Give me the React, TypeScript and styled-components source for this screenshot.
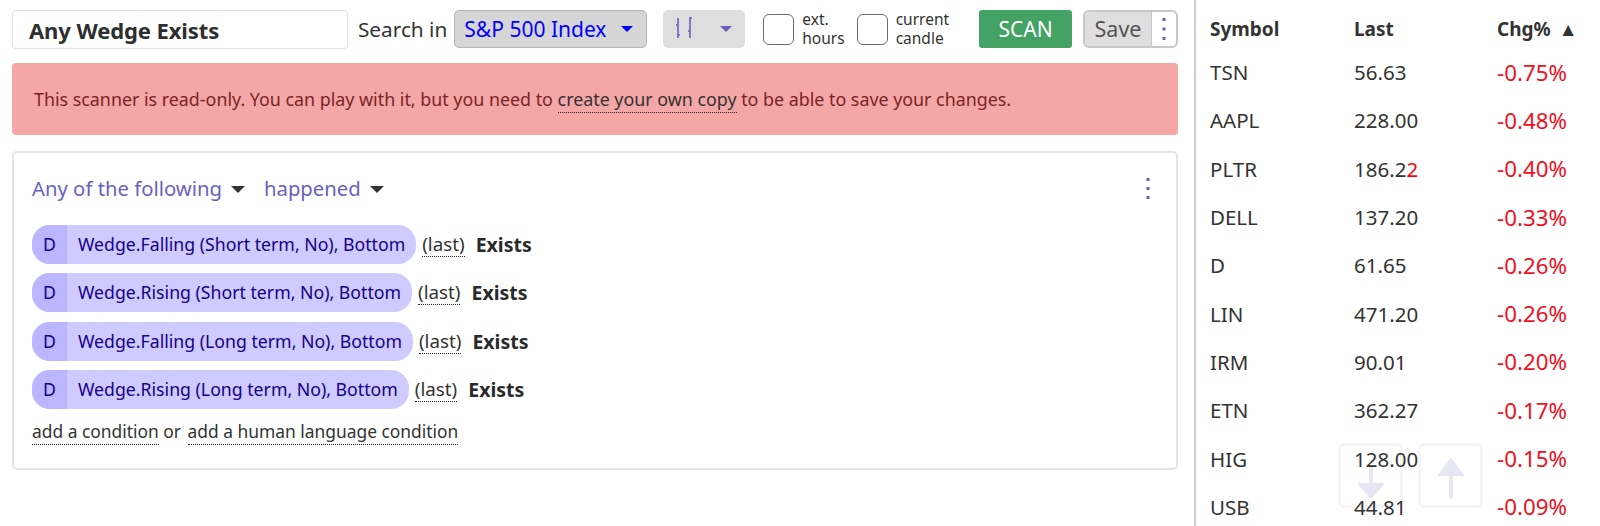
import styled, { createGlobalStyle } from "styled-components"

const GlobalStyles = createGlobalStyle`
  *,
  *::before,
  *::after {
    box-sizing: border-box;
    margin: 0;
    padding: 0;
  }

  html,
  body {
    height: 526px;
    overflow: hidden;
    background: #fff;
    font-family: "Noto Sans", "Open Sans", sans-serif;
    color: #333;
  }
`

const Page = styled.div`
  position: relative;
  display: flex;
  width: 1600px;
  height: 526px;
  overflow: hidden;
`

const Main = styled.main`
  width: 1194px;
  flex: none;
  padding: 9px 16px 0 12px;
  display: flex;
  flex-direction: column;
`

const Toolbar = styled.div`
  display: flex;
  align-items: flex-start;
  height: 40px;
`

const NameInput = styled.div`
  width: 336px;
  height: 39px;
  margin-top: 1px;
  border: 1px solid #e2e2e2;
  border-radius: 4px;
  padding-left: 16px;
  font-size: 22px;
  line-height: 39px;
  font-weight: 700;
  letter-spacing: -0.1px;
  color: #2e2e2e;
  white-space: nowrap;
`

const SearchLabel = styled.span`
  margin-left: 10px;
  font-size: 20.8px;
  line-height: 40px;
  color: #333;
  white-space: nowrap;
`

const MarketSelect = styled.div`
  width: 193px;
  height: 38px;
  margin: 1px 0 0 7px;
  padding: 0 13px 0 9px;
  display: flex;
  align-items: center;
  justify-content: space-between;
  background: #d6d6d6;
  border: 1px solid #b5b5b5;
  border-radius: 5px;
  color: #0000ff;
  font-size: 21px;
  white-space: nowrap;
`

const Caret = styled.span<{ $color: string; $size: number }>`
  width: 0;
  height: 0;
  border-left: ${(props) => props.$size}px solid transparent;
  border-right: ${(props) => props.$size}px solid transparent;
  border-top: ${(props) => props.$size}px solid ${(props) => props.$color};
`

const ChartSelect = styled.div`
  width: 82px;
  height: 38px;
  margin: 1px 0 0 16px;
  padding: 0 13px 0 12px;
  display: flex;
  align-items: center;
  justify-content: space-between;
  background: #dedede;
  border-radius: 5px;
`

const CheckGroup = styled.div<{ $gap: number }>`
  display: flex;
  align-items: center;
  height: 40px;
  margin-left: ${(props) => props.$gap}px;
`

const CheckBox = styled.span`
  width: 31px;
  height: 31px;
  flex: none;
  border: 1.5px solid #6b6b6b;
  border-radius: 6px;
  background: #fff;
`

const CheckLabel = styled.span`
  margin-left: 8px;
  font-size: 15.5px;
  line-height: 19px;
  color: #333;
`

const ScanButton = styled.div`
  width: 93px;
  height: 38px;
  margin: 1px 0 0 30px;
  background: #44a265;
  border-radius: 3px;
  color: #fff;
  font-size: 21px;
  line-height: 38px;
  text-align: center;
`

const SaveGroup = styled.div`
  width: 95px;
  height: 38px;
  margin: 1px 0 0 11px;
  display: flex;
  border: 2px solid #c8c8c8;
  border-radius: 6px;
  overflow: hidden;
`

const SaveButton = styled.div`
  flex: 1;
  background: #dedede;
  color: #555;
  font-size: 21.5px;
  line-height: 34px;
  text-align: center;
`

const SaveMenu = styled.div`
  width: 25px;
  display: flex;
  align-items: center;
  justify-content: center;
  border-left: 1px solid #c8c8c8;
`

const Notice = styled.div`
  height: 72px;
  margin-top: 14px;
  padding-left: 22px;
  background: #f5a6a6;
  border-radius: 4px;
  color: #7a2525;
  font-size: 17.85px;
  line-height: 72px;
  white-space: nowrap;
`

const DottedLink = styled.span`
  color: #333;
  border-bottom: 1.5px dotted #222;
  padding-bottom: 1px;
`

const Card = styled.section`
  height: 319px;
  margin-top: 16px;
  padding: 15px 19px 0 18px;
  border: 2px solid #e4e4e4;
  border-radius: 5px;
`

const CardHeader = styled.div`
  display: flex;
  align-items: center;
  height: 40px;
  margin-bottom: 17px;
`

const Selector = styled.span`
  color: #6a5fc1;
  font-size: 20.3px;
`

const HeaderCaret = styled.span<{ $left: number; $right: number }>`
  margin: 2px ${(props) => props.$right}px 0 ${(props) => props.$left}px;
  display: flex;
`

const CardMenu = styled.div`
  margin-left: auto;
  margin-right: 7px;
  display: flex;
`

const ConditionRow = styled.div`
  display: flex;
  align-items: center;
  height: 39px;
  margin-bottom: 9.3px;
`

const Chip = styled.div`
  display: flex;
  height: 39px;
  border-radius: 18px;
  overflow: hidden;
  background: #cfcbff;
  color: #15008c;
  font-size: 17.7px;
  line-height: 39px;
`

const ChipTag = styled.span`
  width: 35px;
  background: #bbb6ff;
  text-align: center;
`

const ChipLabel = styled.span`
  padding: 0 11px;
`

const LastLabel = styled.span`
  margin-left: 6px;
  font-size: 18.8px;
  line-height: 24px;
  color: #333;
  border-bottom: 1.5px dotted #222;
`

const ExistsLabel = styled.span`
  margin-left: 11px;
  font-size: 19.5px;
  font-weight: 700;
  color: #2a2a2a;
`

const AddRow = styled.div`
  margin-top: 10px;
  font-size: 17.4px;
  line-height: 24px;
  color: #333;

  ${DottedLink}:last-child {
    margin-left: 2px;
  }
`

const Sidebar = styled.aside`
  position: relative;
  z-index: 1;
  width: 406px;
  flex: none;
  border-left: 2px solid #cccccc;
  padding: 10px 0 0 14px;
`

const QuoteRow = styled.div<{ $head?: boolean }>`
  display: grid;
  grid-template-columns: 144px 143px 1fr;
  height: ${(props) => (props.$head ? "38px" : "48.3px")};
  align-items: center;
  font-size: ${(props) => (props.$head ? "19px" : "20.5px")};
  font-weight: ${(props) => (props.$head ? 700 : 400)};
  word-spacing: ${(props) => (props.$head ? "3px" : "0")};
  color: #333;
`

const Change = styled.span`
  color: #f01020;
  font-size: 22.3px;
`

const Tick = styled.span`
  color: #f00;
`

const ScrollButton = styled.div<{ $right: number }>`
  position: absolute;
  top: 443px;
  right: ${(props) => props.$right}px;
  width: 65px;
  height: 65px;
  border: 3px solid #f5f5f8;
  border-radius: 6px;
  display: flex;
  align-items: center;
  justify-content: center;
`

const quotes = [
  { symbol: "TSN", last: "56.63", change: "-0.75%" },
  { symbol: "AAPL", last: "228.00", change: "-0.48%" },
  { symbol: "PLTR", last: "186.2", tick: "2", change: "-0.40%" },
  { symbol: "DELL", last: "137.20", change: "-0.33%" },
  { symbol: "D", last: "61.65", change: "-0.26%" },
  { symbol: "LIN", last: "471.20", change: "-0.26%" },
  { symbol: "IRM", last: "90.01", change: "-0.20%" },
  { symbol: "ETN", last: "362.27", change: "-0.17%" },
  { symbol: "HIG", last: "128.00", change: "-0.15%" },
  { symbol: "USB", last: "44.81", change: "-0.09%" },
]

const conditions = [
  "Wedge.Falling (Short term, No), Bottom",
  "Wedge.Rising (Short term, No), Bottom",
  "Wedge.Falling (Long term, No), Bottom",
  "Wedge.Rising (Long term, No), Bottom",
]

const Dots = ({ height }: { height: number }) => (
  <svg width="4" height={height} viewBox={`0 0 4 ${height}`}>
    <rect x="0.5" y="0" width="3" height="3" fill="#6a5fc1" />
    <rect x="0.5" y={height / 2 - 1.5} width="3" height="3" fill="#6a5fc1" />
    <rect x="0.5" y={height - 3} width="3" height="3" fill="#6a5fc1" />
  </svg>
)

const CandleIcon = () => (
  <svg width="20" height="26" viewBox="0 0 20 26" fill="none" stroke="#6a5fc1" strokeWidth="1.6">
    <path d="M3 2V22M1 9H3M3 19H5" />
    <path d="M15 1V22M15 2H17M13 15H15" />
  </svg>
)

const ArrowDown = () => (
  <svg width="36" height="52" viewBox="0 0 36 52" fill="none">
    <path d="M18 18V36" stroke="#e6e6f5" strokeWidth="4" strokeLinecap="round" />
    <path d="M6 34H30L18 48Z" fill="#e6e6f5" stroke="#e6e6f5" strokeWidth="2" strokeLinejoin="round" />
  </svg>
)

const ArrowUp = () => (
  <svg width="36" height="52" viewBox="0 0 36 52" fill="none">
    <path d="M18 22V47" stroke="#e6e6f5" strokeWidth="4" strokeLinecap="round" />
    <path d="M6 25H30L18 9Z" fill="#e6e6f5" stroke="#e6e6f5" strokeWidth="2" strokeLinejoin="round" />
  </svg>
)

const App = () => {
  return (
    <>
      <GlobalStyles />
      <Page>
        <Main>
          <Toolbar>
            <NameInput>Any Wedge Exists</NameInput>
            <SearchLabel>Search in</SearchLabel>
            <MarketSelect>
              S&amp;P 500 Index
              <Caret $color="#0000ff" $size={6} />
            </MarketSelect>
            <ChartSelect>
              <CandleIcon />
              <Caret $color="#6a5fc1" $size={6} />
            </ChartSelect>
            <CheckGroup $gap={18}>
              <CheckBox />
              <CheckLabel>
                ext.
                <br />
                hours
              </CheckLabel>
            </CheckGroup>
            <CheckGroup $gap={12}>
              <CheckBox />
              <CheckLabel>
                current
                <br />
                candle
              </CheckLabel>
            </CheckGroup>
            <ScanButton>SCAN</ScanButton>
            <SaveGroup>
              <SaveButton>Save</SaveButton>
              <SaveMenu>
                <Dots height={22} />
              </SaveMenu>
            </SaveGroup>
          </Toolbar>

          <Notice>
            This scanner is read-only. You can play with it, but you need to{" "}
            <DottedLink>create your own copy</DottedLink> to be able to save your changes.
          </Notice>

          <Card>
            <CardHeader>
              <Selector>Any of the following</Selector>
              <HeaderCaret $left={9} $right={19}>
                <Caret $color="#333" $size={7} />
              </HeaderCaret>
              <Selector>happened</Selector>
              <HeaderCaret $left={9} $right={0}>
                <Caret $color="#333" $size={7} />
              </HeaderCaret>
              <CardMenu>
                <Dots height={21} />
              </CardMenu>
            </CardHeader>

            {conditions.map((condition) => (
              <ConditionRow key={condition}>
                <Chip>
                  <ChipTag>D</ChipTag>
                  <ChipLabel>{condition}</ChipLabel>
                </Chip>
                <LastLabel>(last)</LastLabel>
                <ExistsLabel>Exists</ExistsLabel>
              </ConditionRow>
            ))}

            <AddRow>
              <DottedLink>add a condition</DottedLink> or{" "}
              <DottedLink>add a human language condition</DottedLink>
            </AddRow>
          </Card>
        </Main>

        <Sidebar>
          <QuoteRow $head>
            <span>Symbol</span>
            <span>Last</span>
            <span>Chg% ▲</span>
          </QuoteRow>
          {quotes.map((quote) => (
            <QuoteRow key={quote.symbol}>
              <span>{quote.symbol}</span>
              <span>
                {quote.last}
                {quote.tick && <Tick>{quote.tick}</Tick>}
              </span>
              <Change>{quote.change}</Change>
            </QuoteRow>
          ))}
        </Sidebar>

        <ScrollButton $right={197}>
          <ArrowDown />
        </ScrollButton>
        <ScrollButton $right={117}>
          <ArrowUp />
        </ScrollButton>
      </Page>
    </>
  )
}

export default App
